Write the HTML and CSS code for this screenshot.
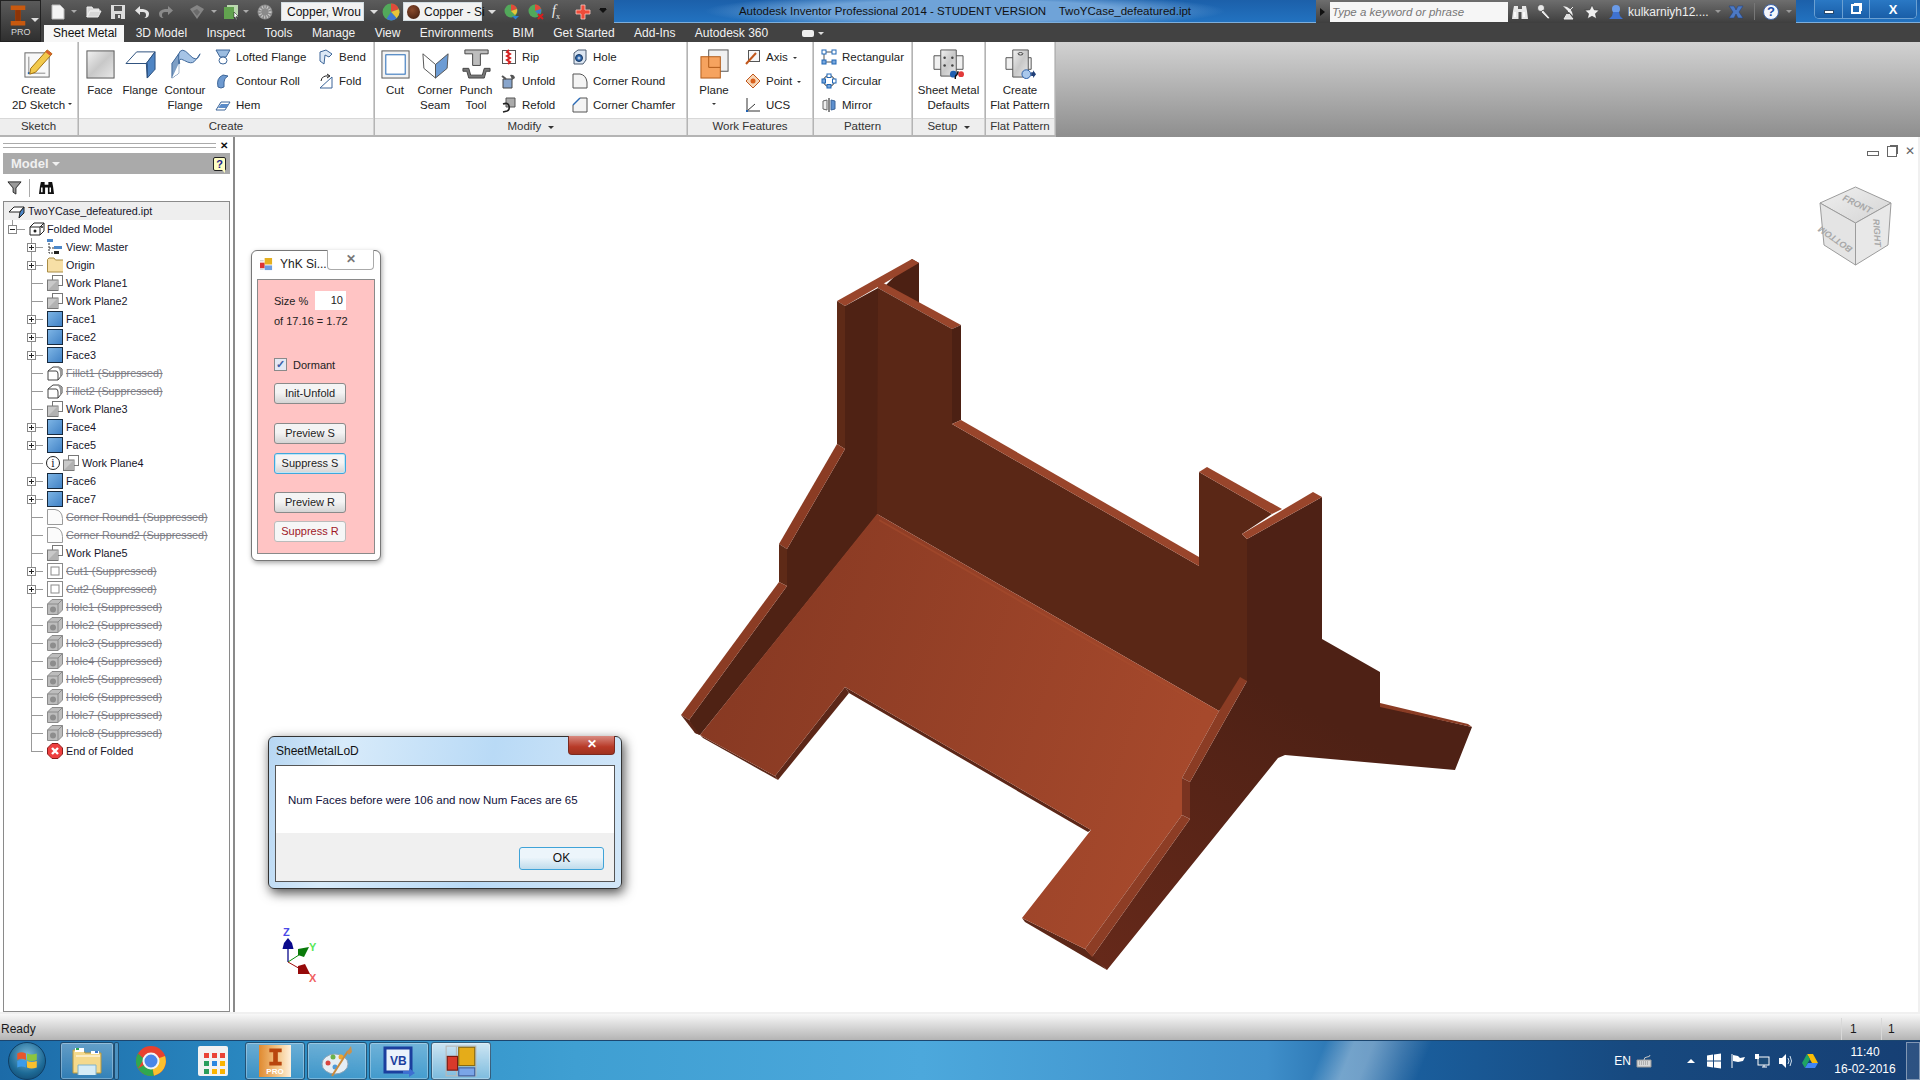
FILE: index.html
```html
<!DOCTYPE html>
<html lang="en">
<head>
    <meta charset="UTF-8">
    <title>Autodesk Inventor Professional 2014 - TwoYCase_defeatured.ipt</title>
    <link rel="stylesheet" href="styles.css">
</head>
<body>
<svg class="svg-defs" aria-hidden="true">
    <defs>
        <linearGradient id="g-face" x1="0" y1="0" x2="1" y2="1"><stop offset="0" stop-color="#7fb6e6"/><stop offset="1" stop-color="#3f80c4"/></linearGradient>
        <linearGradient id="g-steel" x1="0" y1="0" x2="1" y2="1"><stop offset="0" stop-color="#f2f2f2"/><stop offset=".5" stop-color="#c8c8c8"/><stop offset="1" stop-color="#e8e8e8"/></linearGradient>
        <linearGradient id="g-floor" gradientUnits="userSpaceOnUse" x1="700" y1="600" x2="1190" y2="760"><stop offset="0" stop-color="#853822"/><stop offset="1" stop-color="#a6492c"/></linearGradient>
        <linearGradient id="g-end" gradientUnits="userSpaceOnUse" x1="1250" y1="680" x2="1100" y2="970"><stop offset="0" stop-color="#4e2115"/><stop offset="1" stop-color="#66291a"/></linearGradient>
        <linearGradient id="g-cube" x1="0" y1="0" x2="1" y2="1"><stop offset="0" stop-color="#f0f0f0"/><stop offset="1" stop-color="#d4d4d4"/></linearGradient>
        <symbol id="i-face" viewBox="0 0 16 16"><rect x=".5" y=".5" width="15" height="15" fill="url(#g-face)" stroke="#16283c"/></symbol>
        <symbol id="i-plane" viewBox="0 0 16 16"><rect x="5.5" y=".5" width="10" height="10" fill="#fff" stroke="#777"/><rect x=".5" y="5" width="10.5" height="10.5" fill="#c9c9c9" stroke="#777"/><path d="M1 15 11 5v10z" fill="#b2b2b2"/></symbol>
        <symbol id="i-fillet" viewBox="0 0 16 16"><path d="M1 6 6 2h6l3 2v6l-4 5H1z" fill="#fff" stroke="#444"/><path d="M10 2h2l3 2v6l-2 2V7q0-3-3-5z" fill="#999"/><path d="M1 6h8q2 0 2 3v6" fill="none" stroke="#444"/></symbol>
        <symbol id="i-corner" viewBox="0 0 16 16"><path d="M.5 15.5V.5H8q7 1 7.5 9v6z" fill="#fbfbfb" stroke="#9a9a9a"/></symbol>
        <symbol id="i-cut" viewBox="0 0 16 16"><rect x=".5" y=".5" width="15" height="15" fill="#fff" stroke="#8a8a8a"/><rect x="4" y="4" width="8" height="8" fill="#fff" stroke="#8a8a8a"/></symbol>
        <symbol id="i-hole" viewBox="0 0 16 16"><path d="M.5 5 5 .5h10.500V11L11 15.500H.5z" fill="#bdbdbd" stroke="#8a8a8a"/><path d="M.5 5H11v10.500M11 5l4.500-4.500" fill="none" stroke="#8a8a8a"/><circle cx="6" cy="10.5" r="3" fill="#8d8d8d"/></symbol>
        <symbol id="i-hole-small" viewBox="0 0 16 16"><path d="M2 4 6 1h8v10l-3 4H2z" fill="#dce6f2" stroke="#4a5a70"/><circle cx="7" cy="9" r="3.5" fill="#2d66ad" stroke="#17375f"/><circle cx="7" cy="9" r="1.5" fill="#b9cde6"/></symbol>
        <symbol id="i-binoc" viewBox="0 0 16 16"><path d="M2 2h4v3h4V2h4l1 5 1 8H9.500V8h-3v7H0l1-8z" fill="currentColor"/><path d="M3 8v5M12 8v5" stroke="#fff" stroke-width="1.6"/></symbol>
    </defs>
</svg>

<div class="app-head">
    <div class="app-logo">
        <svg class="logo-mark" viewBox="0 0 22 24"><path d="M3 1h16v5h-5v12h5v5H3v-5h5V6H3z" fill="#c8590f"/><path d="M8 6h6v12H8z" fill="#8c3408"/></svg>
        <span class="logo-text">PRO</span>
        <span class="logo-caret"></span>
    </div>
    <div class="head-rows">
        <div class="title-bar">
            <div class="qat">
                <svg class="qat-icon qat-new" viewBox="0 0 16 16"><path d="M2 1h8l4 4v10H2z" fill="#f4f4f4" stroke="#bbb"/></svg>
                <span class="qat-caret qat-new-caret"></span>
                <svg class="qat-icon qat-open" viewBox="0 0 16 16"><path d="M1 13V3h5l1 2h6v2H4l-3 6 3-6h11l-3 6z" fill="#d8d8d8" stroke="#eee"/></svg>
                <svg class="qat-icon qat-save" viewBox="0 0 16 16"><path d="M1 1h14v14H1z" fill="#ddd"/><path d="M4 2h8v5H4z" fill="#555"/><path d="M5 10h6v5H5z" fill="#555"/><path d="M8 11h2v3H8z" fill="#ddd"/></svg>
                <svg class="qat-icon qat-undo" viewBox="0 0 16 16"><path d="M6 2 1 6.5 6 11V8h3q3 0 3 3t-2 3h2q3-1 3-4.500T9 5H6z" fill="#e4e4e4"/></svg>
                <svg class="qat-icon qat-redo" viewBox="0 0 16 16"><path d="M10 2l5 4.500-5 4.500V8H7q-3 0-3 3t2 3H4q-3-1-3-4.500T7 5h3z" fill="#8a8a8a"/></svg>
                <svg class="qat-icon qat-return" viewBox="0 0 16 16"><path d="M1 5l7-4 7 4-7 10z" fill="#858585"/><path d="M4 7l4-2 3 3-3 4z" fill="#6b6b6b"/></svg>
                <span class="qat-caret qat-return-caret"></span>
                <svg class="qat-icon qat-update" viewBox="0 0 16 16"><path d="M1 3h10v12H1z" fill="#62a34f"/><path d="M4 1h11v12H11V3H4z" fill="#bcd9b0"/><path d="M11 8l4 4-2 .5 1 3-1 .5-1-3-1 1z" fill="#fff" stroke="#111" stroke-width=".5"/></svg>
                <span class="qat-caret qat-update-caret"></span>
                <svg class="qat-icon qat-globe" viewBox="0 0 16 16"><circle cx="8" cy="8" r="7.5" fill="#8a8a8a"/><circle cx="8" cy="8" r="5" fill="none" stroke="#c9c9c9" stroke-dasharray="1 1.5" stroke-width="3"/></svg>
                <div class="qat-combo combo-material"><span class="combo-text">Copper, Wrou</span></div>
                <span class="combo-caret"></span>
                <svg class="qat-icon qat-wheel" viewBox="0 0 16 16"><circle cx="8" cy="8" r="7.5" fill="#52a85a"/><path d="M8 8V.5a7.5 7.5 0 0 1 7 5z" fill="#e04b3a"/><path d="M8 8 15 5.500a7.5 7.5 0 0 1-2 8z" fill="#e8c33a"/><path d="M8 8l5 5.500a7.5 7.5 0 0 1-9 .5z" fill="#3f78d0"/></svg>
                <div class="qat-combo combo-appearance">
                    <span class="swatch"></span>
                    <span class="combo-text">Copper - Si</span>
                </div>
                <span class="combo-caret"></span>
                <svg class="qat-icon qat-clear" viewBox="0 0 16 16"><circle cx="7" cy="7" r="6.5" fill="#52a85a"/><path d="M7 7V.5A6.5 6.5 0 0 1 13 5z" fill="#e04b3a"/><path d="M7 7 13 5a6.5 6.5 0 0 1-2 6z" fill="#e8c33a"/><path d="M8 12h7l-3.500 3.500z" fill="#2b7fd0"/></svg>
                <svg class="qat-icon qat-clear-two" viewBox="0 0 16 16"><circle cx="7" cy="7" r="6.5" fill="#52a85a"/><path d="M7 7V.5A6.5 6.5 0 0 1 13 5z" fill="#e04b3a"/><path d="M7 7 13 5a6.5 6.5 0 0 1-2 6z" fill="#3f78d0"/><path d="M10 10l5 5m0-5-5 5" stroke="#d81e1e" stroke-width="2"/></svg>
                <span class="qat-fx"><i>f</i><sub>x</sub></span>
                <svg class="qat-icon qat-cross" viewBox="0 0 16 16"><path d="M6 1h4v5h5v4h-5v5H6v-5H1V6h5z" fill="#f04c3a" stroke="#f7c9c0" stroke-width=".8"/></svg>
                <span class="qat-more"></span>
            </div>
            <div class="title-text">Autodesk Inventor Professional 2014 - STUDENT VERSION &nbsp;&nbsp; TwoYCase_defeatured.ipt</div>
            <div class="search-bar">
                <span class="search-arrow"></span>
                <div class="search-input">Type a keyword or phrase</div>
                <svg class="search-icon search-binoc"><use href="#i-binoc"/></svg>
                <svg class="search-icon search-key" viewBox="0 0 16 16"><circle cx="5" cy="4" r="3.5" fill="#e8e8e8" stroke="#333" stroke-width=".6"/><path d="M7 6l7 8-2 1-7-7z" fill="#e8e8e8" stroke="#333" stroke-width=".6"/></svg>
                <svg class="search-icon search-dish" viewBox="0 0 16 16"><path d="M3 2q9 1 10 10z" fill="#eee"/><path d="M8 8l5-5M7 10l-3 5h9l-4-5" stroke="#eee" fill="#ddd"/></svg>
                <svg class="search-icon search-star" viewBox="0 0 16 16"><path d="M8 1l2.200 4.800 5 .5-3.800 3.400 1.100 5L8 12.200 3.500 14.700l1.100-5L.8 6.300l5-.5z" fill="#eee" stroke="#222" stroke-width=".5"/></svg>
                <svg class="search-icon search-user" viewBox="0 0 16 16"><circle cx="8" cy="5" r="4" fill="#6a9be8"/><path d="M5 8h6l1 4 3 3H1l3-3z" fill="#3f72cf"/></svg>
                <span class="search-user-name">kulkarniyh12....</span>
                <span class="search-caret"></span>
                <svg class="search-icon search-x" viewBox="0 0 16 16"><path d="M1 2h5l2 4 2-4h5l-4 6 4 6h-5l-2-4-2 4H1l4-6z" fill="#4c79c4" stroke="#1f3c78" stroke-width=".5"/></svg>
                <span class="search-sep"></span>
                <span class="search-help">?</span>
                <span class="search-caret"></span>
            </div>
            <div class="win-buttons">
                <span class="win-btn win-min"><span class="glyph-min"></span></span>
                <span class="win-btn win-max"><span class="glyph-max"></span></span>
                <span class="win-btn win-close">X</span>
            </div>
        </div>
        <nav class="tab-bar">
            <a class="tab tab-active">Sheet Metal</a>
            <a class="tab">3D Model</a>
            <a class="tab">Inspect</a>
            <a class="tab">Tools</a>
            <a class="tab">Manage</a>
            <a class="tab">View</a>
            <a class="tab">Environments</a>
            <a class="tab">BIM</a>
            <a class="tab">Get Started</a>
            <a class="tab">Add-Ins</a>
            <a class="tab">Autodesk 360</a>
            <span class="tab-extra"><span class="tab-pill"></span><span class="tab-pill-caret"></span></span>
        </nav>
    </div>
</div>

<div class="ribbon">
    <section class="panel panel-sketch">
        <div class="panel-body">
            <div class="big-btn btn-full">
                <svg class="big-icon" viewBox="0 0 32 32"><rect x="2" y="5" width="25" height="25" fill="#f8f8f8" stroke="#666"/><path d="M6 9v17h17" fill="none" stroke="#888"/><rect x="5" y="25" width="2" height="2" fill="#1d5fb0"/><path d="M8 21 25 2l5 4L13 25l-6 2z" fill="#f2c94c" stroke="#a0700f"/><path d="M25 2l5 4-2 2-5-4z" fill="#d9602c"/></svg>
                <span class="big-label">Create<br>2D Sketch</span>
                <span class="mini-caret caret-sketch"></span>
            </div>
        </div>
        <div class="panel-title">Sketch</div>
    </section>
    <section class="panel panel-create">
        <div class="panel-body">
            <div class="big-btn btn-face">
                <svg class="big-icon" viewBox="0 0 32 32"><rect x="2" y="3" width="28" height="28" fill="url(#g-steel)" stroke="#555"/></svg>
                <span class="big-label">Face</span>
            </div>
            <div class="big-btn btn-flange">
                <svg class="big-icon" viewBox="0 0 32 32"><path d="M1 16 12 4h19L22 16z" fill="#fff" stroke="#2a4e7c"/><path d="M22 16l9-12v18l-8 9z" fill="#4f85c4" stroke="#2a4e7c"/><path d="M22 16h1v15" stroke="#2a4e7c" fill="none"/></svg>
                <span class="big-label">Flange</span>
            </div>
            <div class="big-btn btn-contour">
                <svg class="big-icon" viewBox="0 0 32 32"><path d="M2 16q4-2 7-10t11 1 11-1q-3 5-6 8t-10-1-5 3z" fill="#a6c4e6" stroke="#3c6598"/><path d="M2 16 9 6v20l-7 5z" fill="#7e9fc5" stroke="#3c6598"/><path d="M2 31l7-5V16z" fill="#fff"/></svg>
                <span class="big-label">Contour<br>Flange</span>
            </div>
            <div class="small-col col-create-one">
                <div class="small-btn">
                    <svg class="small-icon" viewBox="0 0 16 16"><path d="M1 1h14l-4 7H5z" fill="#9bbce0" stroke="#3c6598"/><ellipse cx="8" cy="11.5" rx="4" ry="3.5" fill="#fff" stroke="#3c6598"/></svg>
                    <span>Lofted Flange</span>
                </div>
                <div class="small-btn">
                    <svg class="small-icon" viewBox="0 0 16 16"><path d="M3 14q-2-9 5-12l5 1q-4 2-4 6v5l-3 1z" fill="#6e9ad0" stroke="#3c6598"/></svg>
                    <span>Contour Roll</span>
                </div>
                <div class="small-btn">
                    <svg class="small-icon" viewBox="0 0 16 16"><path d="M1 13 6 5h9l-5 8z" fill="#fff" stroke="#3c6598"/><path d="M3 11l3-4h8l-3 4z" fill="#5a8bc8"/></svg>
                    <span>Hem</span>
                </div>
            </div>
            <div class="small-col">
                <div class="small-btn">
                    <svg class="small-icon" viewBox="0 0 16 16"><path d="M2 3l6-2 6 4-3 3-4-2-1 9-4-3z" fill="#dce8f5" stroke="#3c6598"/></svg>
                    <span>Bend</span>
                </div>
                <div class="small-btn">
                    <svg class="small-icon" viewBox="0 0 16 16"><path d="M2 15 14 4v11z" fill="#fff" stroke="#3c6598"/><path d="M3 8q1-6 8-5M9 1l3 2-3 2" fill="none" stroke="#222"/></svg>
                    <span>Fold</span>
                </div>
            </div>
        </div>
        <div class="panel-title">Create</div>
    </section>
    <section class="panel panel-modify">
        <div class="panel-body">
            <div class="big-btn btn-cut">
                <svg class="big-icon" viewBox="0 0 32 32"><rect x="2" y="3" width="28" height="28" fill="#f3f3f3" stroke="#555"/><rect x="6" y="7" width="20" height="20" fill="#fff" stroke="#1f66b5"/></svg>
                <span class="big-label">Cut</span>
            </div>
            <div class="big-btn btn-seam">
                <svg class="big-icon" viewBox="0 0 32 32"><path d="M3 6 16 17v14L4 21z" fill="#fff" stroke="#555"/><path d="M29 6 16 17v14l12-10z" fill="#6d9cd4" stroke="#555"/></svg>
                <span class="big-label">Corner<br>Seam</span>
            </div>
            <div class="big-btn btn-punch">
                <svg class="big-icon" viewBox="0 0 32 32"><path d="M4 2h24v4H20v12h-8V6H4z" fill="#bdbdbd" stroke="#444"/><path d="M2 21h6l2 7h12l2-7h6v3h-4l-2 7H8l-2-7H2z" fill="#777" stroke="#444"/></svg>
                <span class="big-label">Punch<br>Tool</span>
            </div>
            <div class="small-col col-modify-one">
                <div class="small-btn">
                    <svg class="small-icon" viewBox="0 0 16 16"><rect x="1.5" y="1.5" width="13" height="13" fill="#fff" stroke="#555"/><path d="M8 1l-2 2 3 2-3 2 3 2-3 2 3 2-2 2" fill="none" stroke="#d62020" stroke-width="2"/></svg>
                    <span>Rip</span>
                </div>
                <div class="small-btn">
                    <svg class="small-icon" viewBox="0 0 16 16"><path d="M2 6h9v9H2z" fill="#88a5cc" stroke="#444"/><path d="M9 2q4-1 5 3l-3 2-1-3z" fill="#555"/><path d="M1 3l4 3" stroke="#555" stroke-width="2"/></svg>
                    <span>Unfold</span>
                </div>
                <div class="small-btn">
                    <svg class="small-icon" viewBox="0 0 16 16"><path d="M5 1h9v9H5z" fill="#aaa" stroke="#555"/><path d="M2 7q5-2 6 2t-2 5l-4 1" fill="none" stroke="#222" stroke-width="1.6"/></svg>
                    <span>Refold</span>
                </div>
            </div>
            <div class="small-col">
                <div class="small-btn">
                    <svg class="small-icon"><use href="#i-hole-small"/></svg>
                    <span>Hole</span>
                </div>
                <div class="small-btn">
                    <svg class="small-icon" viewBox="0 0 16 16"><path d="M1 15V1h7q6 1 7 8v6z" fill="#f4f4f4" stroke="#555"/></svg>
                    <span>Corner Round</span>
                </div>
                <div class="small-btn">
                    <svg class="small-icon" viewBox="0 0 16 16"><path d="M1 15V8l7-7h7v14z" fill="#f4f4f4" stroke="#555"/><path d="M1 8l7-7" stroke="#2a6ab5" stroke-width="1.4"/></svg>
                    <span>Corner Chamfer</span>
                </div>
            </div>
        </div>
        <div class="panel-title">Modify <span class="title-caret"></span></div>
    </section>
    <section class="panel panel-work">
        <div class="panel-body">
            <div class="big-btn btn-plane">
                <svg class="big-icon" viewBox="0 0 32 32"><rect x="10" y="2" width="20" height="22" fill="#f0f0f0" stroke="#555"/><rect x="2" y="9" width="20" height="22" fill="#f6a35f" stroke="#b05a18"/><path d="M10 9v11h12" fill="none" stroke="#b05a18"/></svg>
                <span class="big-label">Plane</span>
                <span class="mini-caret caret-plane"></span>
            </div>
            <div class="small-col">
                <div class="small-btn">
                    <svg class="small-icon" viewBox="0 0 16 16"><rect x="3.5" y="1.5" width="11" height="11" fill="#f6f6f6" stroke="#555"/><path d="M1 15 11 4" stroke="#c0561b" stroke-width="2"/></svg>
                    <span>Axis</span><span class="mini-caret"></span>
                </div>
                <div class="small-btn">
                    <svg class="small-icon" viewBox="0 0 16 16"><path d="M8 1l7 7-7 7-7-7z" fill="#f7d5b5" stroke="#c0561b"/><circle cx="8" cy="8" r="2.5" fill="#d9601c"/></svg>
                    <span>Point</span><span class="mini-caret"></span>
                </div>
                <div class="small-btn">
                    <svg class="small-icon" viewBox="0 0 16 16"><path d="M2 1v13h13M2 14 10 7" fill="none" stroke="#333"/><rect x="1" y="13" width="2" height="2" fill="#1d5fb0"/></svg>
                    <span>UCS</span>
                </div>
            </div>
        </div>
        <div class="panel-title">Work Features</div>
    </section>
    <section class="panel panel-pattern">
        <div class="panel-body">
            <div class="small-col">
                <div class="small-btn">
                    <svg class="small-icon" viewBox="0 0 16 16"><path d="M3 3h10M3 13h10M3 3v10" stroke="#555" fill="none"/><rect x="1" y="1" width="4" height="4" fill="#fff" stroke="#1f66b5"/><rect x="11" y="1" width="4" height="4" fill="#fff" stroke="#1f66b5"/><rect x="1" y="11" width="4" height="4" fill="#7aa7dc" stroke="#1f66b5"/><rect x="11" y="11" width="4" height="4" fill="#7aa7dc" stroke="#1f66b5"/></svg>
                    <span>Rectangular</span>
                </div>
                <div class="small-btn">
                    <svg class="small-icon" viewBox="0 0 16 16"><circle cx="8" cy="8" r="5.5" fill="none" stroke="#333"/><rect x="6" y="1" width="4" height="3.5" fill="#fff" stroke="#1f66b5"/><rect x="1" y="6" width="3.5" height="4" fill="#7aa7dc" stroke="#1f66b5"/><rect x="11.5" y="6" width="3.5" height="4" fill="#fff" stroke="#1f66b5"/><rect x="6" y="11.5" width="4" height="3.5" fill="#7aa7dc" stroke="#1f66b5"/></svg>
                    <span>Circular</span>
                </div>
                <div class="small-btn">
                    <svg class="small-icon" viewBox="0 0 16 16"><path d="M8 1v14" stroke="#111"/><path d="M6 3 2 4v8l4 1z" fill="#eee" stroke="#666"/><path d="M10 3l4 1v8l-4 1z" fill="#5d90cf" stroke="#3c6598"/></svg>
                    <span>Mirror</span>
                </div>
            </div>
        </div>
        <div class="panel-title">Pattern</div>
    </section>
    <section class="panel panel-setup">
        <div class="panel-body">
            <div class="big-btn btn-full">
                <svg class="big-icon" viewBox="0 0 32 32"><path d="M1 8h30v14H1z" fill="#f0f0f0" stroke="#555"/><path d="M8 2h16v27H8z" fill="url(#g-steel)" stroke="#555"/><circle cx="12" cy="10" r="1.3" fill="#444"/><circle cx="20" cy="10" r="1.3" fill="#444"/><circle cx="12" cy="18" r="1.3" fill="#444"/><circle cx="20" cy="18" r="1.3" fill="#444"/><circle cx="21" cy="27" r="3.5" fill="#1f5fb0"/><circle cx="29" cy="27" r="3" fill="#e23a3a"/><path d="M26 24q-1 4-2 4t-1 4" fill="none" stroke="#111" stroke-width="1.5"/></svg>
                <span class="big-label">Sheet Metal<br>Defaults</span>
            </div>
        </div>
        <div class="panel-title">Setup <span class="title-caret"></span></div>
    </section>
    <section class="panel panel-flat">
        <div class="panel-body">
            <div class="big-btn btn-full">
                <svg class="big-icon" viewBox="0 0 32 32"><path d="M1 10h26v12H1z" fill="#f0f0f0" stroke="#555"/><path d="M8 2h16v28H8z" fill="url(#g-steel)" stroke="#555"/><ellipse cx="16" cy="6" rx="2.5" ry="1.2" fill="#fff" stroke="#333"/><circle cx="22" cy="27" r="4.5" fill="#a9c8ec" stroke="#2a5ea5"/><path d="M27 25h2v-2l3 4-3 4v-2h-2z" fill="#1f3f78"/></svg>
                <span class="big-label">Create<br>Flat Pattern</span>
            </div>
        </div>
        <div class="panel-title">Flat Pattern</div>
    </section>
    <div class="ribbon-rest"></div>
</div>

<div class="main">
    <aside class="browser">
        <div class="browser-grip">
            <span class="grip-lines"></span>
            <span class="grip-close">✕</span>
        </div>
        <div class="browser-header">
            <span class="browser-name">Model</span>
            <span class="browser-name-caret"></span>
            <span class="browser-help">?</span>
        </div>
        <div class="browser-tools">
            <svg class="tool-icon" viewBox="0 0 16 16"><path d="M1 2h14L9.5 8.5V15l-3-2V8.5z" fill="#999" stroke="#222"/></svg>
            <span class="tool-sep"></span>
            <svg class="tool-icon tool-binoc"><use href="#i-binoc"/></svg>
        </div>
        <div class="tree">
            <div class="tree-root">
                <svg class="tree-icon" viewBox="0 0 16 16"><path d="M0 9l5-5h10l-4 5z" fill="#fff" stroke="#222"/><path d="M11 9l4-5v6l-5 5z" fill="#4c87c9" stroke="#222"/></svg>
                <span>TwoYCase_defeatured.ipt</span>
            </div>
            <div class="tree-folded">
                <span class="expander is-open"></span>
                <svg class="tree-icon" viewBox="0 0 16 16"><path d="M1 6l4-4h10v8l-4 4H1z" fill="#fff" stroke="#222"/><path d="M1 6h10v8M11 6l4-4" fill="none" stroke="#222"/><circle cx="6" cy="10" r="1.5" fill="#222"/><circle cx="13" cy="6" r="1" fill="#222"/></svg>
                <span>Folded Model</span>
            </div>
            <ul class="tree-list">
                <li class="tree-row"><span class="expander"></span><svg class="tree-icon" viewBox="0 0 16 16"><path d="M2 4v10h4M2 9h5" fill="none" stroke="#333" stroke-dasharray="2 1"/><rect x="0" y="0" width="6" height="3" fill="#4c87c9"/><rect x="7" y="7" width="8" height="3" fill="#4c87c9"/><rect x="7" y="12" width="5" height="3" fill="#222"/></svg><span>View: Master</span></li>
                <li class="tree-row"><span class="expander"></span><svg class="tree-icon" viewBox="0 0 16 16"><path d="M.5 15V2.5L2 1h5l1.5 2h8v12z" fill="#f7dfa6" stroke="#a98c45"/></svg><span>Origin</span></li>
                <li class="tree-row"><svg class="tree-icon"><use href="#i-plane"/></svg><span>Work Plane1</span></li>
                <li class="tree-row"><svg class="tree-icon"><use href="#i-plane"/></svg><span>Work Plane2</span></li>
                <li class="tree-row"><span class="expander"></span><svg class="tree-icon"><use href="#i-face"/></svg><span>Face1</span></li>
                <li class="tree-row"><span class="expander"></span><svg class="tree-icon"><use href="#i-face"/></svg><span>Face2</span></li>
                <li class="tree-row"><span class="expander"></span><svg class="tree-icon"><use href="#i-face"/></svg><span>Face3</span></li>
                <li class="tree-row is-suppressed"><svg class="tree-icon"><use href="#i-fillet"/></svg><span>Fillet1 (Suppressed)</span></li>
                <li class="tree-row is-suppressed"><svg class="tree-icon"><use href="#i-fillet"/></svg><span>Fillet2 (Suppressed)</span></li>
                <li class="tree-row"><svg class="tree-icon"><use href="#i-plane"/></svg><span>Work Plane3</span></li>
                <li class="tree-row"><span class="expander"></span><svg class="tree-icon"><use href="#i-face"/></svg><span>Face4</span></li>
                <li class="tree-row"><span class="expander"></span><svg class="tree-icon"><use href="#i-face"/></svg><span>Face5</span></li>
                <li class="tree-row row-info"><span class="info-mark">i</span><svg class="tree-icon"><use href="#i-plane"/></svg><span>Work Plane4</span></li>
                <li class="tree-row"><span class="expander"></span><svg class="tree-icon"><use href="#i-face"/></svg><span>Face6</span></li>
                <li class="tree-row"><span class="expander"></span><svg class="tree-icon"><use href="#i-face"/></svg><span>Face7</span></li>
                <li class="tree-row is-suppressed"><svg class="tree-icon"><use href="#i-corner"/></svg><span>Corner Round1 (Suppressed)</span></li>
                <li class="tree-row is-suppressed"><svg class="tree-icon"><use href="#i-corner"/></svg><span>Corner Round2 (Suppressed)</span></li>
                <li class="tree-row"><svg class="tree-icon"><use href="#i-plane"/></svg><span>Work Plane5</span></li>
                <li class="tree-row is-suppressed"><span class="expander"></span><svg class="tree-icon"><use href="#i-cut"/></svg><span>Cut1 (Suppressed)</span></li>
                <li class="tree-row is-suppressed"><span class="expander"></span><svg class="tree-icon"><use href="#i-cut"/></svg><span>Cut2 (Suppressed)</span></li>
                <li class="tree-row is-suppressed"><svg class="tree-icon"><use href="#i-hole"/></svg><span>Hole1 (Suppressed)</span></li>
                <li class="tree-row is-suppressed"><svg class="tree-icon"><use href="#i-hole"/></svg><span>Hole2 (Suppressed)</span></li>
                <li class="tree-row is-suppressed"><svg class="tree-icon"><use href="#i-hole"/></svg><span>Hole3 (Suppressed)</span></li>
                <li class="tree-row is-suppressed"><svg class="tree-icon"><use href="#i-hole"/></svg><span>Hole4 (Suppressed)</span></li>
                <li class="tree-row is-suppressed"><svg class="tree-icon"><use href="#i-hole"/></svg><span>Hole5 (Suppressed)</span></li>
                <li class="tree-row is-suppressed"><svg class="tree-icon"><use href="#i-hole"/></svg><span>Hole6 (Suppressed)</span></li>
                <li class="tree-row is-suppressed"><svg class="tree-icon"><use href="#i-hole"/></svg><span>Hole7 (Suppressed)</span></li>
                <li class="tree-row is-suppressed"><svg class="tree-icon"><use href="#i-hole"/></svg><span>Hole8 (Suppressed)</span></li>
                <li class="tree-row"><svg class="tree-icon" viewBox="0 0 16 16"><path d="M5 .5h6L15.5 5v6L11 15.5H5L.5 11V5z" fill="#ee3f3f" stroke="#8c1c1c"/><path d="M5 5l6 6m0-6-6 6" stroke="#fff" stroke-width="2.4"/></svg><span>End of Folded</span></li>
            </ul>
        </div>
    </aside>

    <div class="viewport">
        <svg class="scene" viewBox="235 137 1683 877">
            <polygon points="912,259 919,263 919,305 885,286" fill="#4c2013"/>
            <polygon points="837,301 912,259 919,263 845,306" fill="#99452b"/>
            <polygon points="876,279 961,325 952,329 878,288" fill="#99452b"/>
            <polygon points="837,301 845,306 845,449 837,444" fill="#5e2a17"/>
            <polygon points="845,306 878,288 878,514 700,735 695,733 689,720 787,586 787,549 845,449" fill="#4f2214"/>
            <polygon points="837,444 845,449 787,549 779,544" fill="#8b3c24"/>
            <polygon points="779,544 787,549 787,586 779,582" fill="#5e2a17"/>
            <polygon points="779,582 787,586 689,720 681,715" fill="#8b3c24"/>
            <polygon points="681,715 689,720 700,735 695,733" fill="#5a2617"/>
            <polygon points="878,288 952,329 952,424 1199,566 1199,472 1272,514 1242,534 1247,539 1247,681 1219,711 877,514" fill="#5a2716"/>
            <polygon points="952,329 961,325 961,420 952,424" fill="#4c2013"/>
            <polygon points="952,424 961,420 1199,557 1199,566" fill="#99452b"/>
            <polygon points="1199,472 1207,467 1282,509 1272,514" fill="#99452b"/>
            <polygon points="1247,539 1322,497 1322,639 1380,672 1380,706 1472,727 1455,770 1285,755 1278,758 1107,970 1092,957 1190,819 1190,782 1247,681" fill="url(#g-end)"/>
            <polygon points="1242,534 1313,492 1322,497 1247,539" fill="#99452b"/>
            <polygon points="1380,703 1468,724 1472,727 1380,707" fill="#8b3c24"/>
            <polygon points="700,735 775,776 778,780 703,738" fill="#5c2718"/>
            <polygon points="775,776 845,687 849,693 778,780" fill="#5c2718"/>
            <polygon points="845,687 1091,830 1088,832 849,693" fill="#5c2718"/>
            <polygon points="1022,918 1085,949 1107,970 1025,922" fill="#5c2718"/>
            <polygon points="877,514 1219,711 1182,778 1182,815 1085,949 1022,918 1091,830 845,687 775,776 700,735" fill="url(#g-floor)"/>
            <polyline points="879,520 1218,715" fill="none" stroke="#a84c2e" stroke-width="2" opacity=".55"/>
            <polygon points="1219,711 1240,677 1247,681 1190,782 1182,778" fill="#8b3c24"/>
            <polygon points="1182,778 1190,782 1190,819 1182,815" fill="#7a3320"/>
            <polygon points="1182,815 1190,819 1092,957 1085,949" fill="#8d3d25"/>

            <g class="triad">
                <path d="M288 962V945" stroke="#0a0a8c" stroke-width="1.3"/>
                <path d="M288 938l4 5 1.5 6h-11l1.5-6z" fill="#0a0a8c"/>
                <path d="M288 962l14-9" stroke="#0a8c0a" stroke-width="1"/>
                <path d="M298 949l11-2-5 10-6-2z" fill="#0a7a0a"/>
                <path d="M288 962l14 8" stroke="#a00a0a" stroke-width="1"/>
                <path d="M298 966l7-2 5 10h-12z" fill="#960a0a"/>
                <text x="283" y="936" class="axis-z">Z</text>
                <text x="309" y="951" class="axis-y">Y</text>
                <text x="309" y="982" class="axis-x">X</text>
            </g>

            <g class="cube">
                <polygon points="1855.5,187 1891,203 1855.5,223 1820,203" fill="url(#g-cube)" stroke="#9c9c9c"/>
                <polygon points="1820,203 1855.5,223 1855.5,265 1824,245" fill="#e4e4e4" stroke="#9c9c9c"/>
                <polygon points="1891,203 1855.5,223 1855.5,265 1888,245" fill="#e8e8e8" stroke="#9c9c9c"/>
                <text class="cube-text" transform="translate(1842,200) rotate(26)">FRONT</text>
                <text class="cube-text" transform="translate(1853,248) rotate(215)">BOTTOM</text>
                <text class="cube-text" transform="translate(1873,219) rotate(86)">RIGHT</text>
            </g>
        </svg>

        <div class="view-controls">
            <span class="view-min"></span>
            <span class="view-restore"></span>
            <span class="view-close">✕</span>
        </div>

        <div class="size-window">
            <div class="size-head">
                <svg class="size-icon" viewBox="0 0 14 14"><rect x="0" y="5" width="5" height="6" fill="#d33"/><rect x="5" y="0" width="8" height="7" fill="#e5b020"/><rect x="5" y="8" width="8" height="5" fill="#6e9de0"/><path d="M0 3h4M0 12h4" stroke="#bbb"/></svg>
                <span>YhK Si...</span>
                <span class="size-close">✕</span>
            </div>
            <div class="size-body">
                <div class="size-row">
                    <span>Size %</span>
                    <span class="size-input">10</span>
                </div>
                <div class="size-result">of 17.16 = 1.72</div>
                <label class="dormant"><span class="check">✓</span>Dormant</label>
                <div class="size-btn btn-init">Init-Unfold</div>
                <div class="size-btn btn-prev-s">Preview S</div>
                <div class="size-btn btn-sup-s">Suppress S</div>
                <div class="size-btn btn-prev-r">Preview R</div>
                <div class="size-btn btn-sup-r">Suppress R</div>
            </div>
        </div>

        <div class="msg-window">
            <div class="msg-head">
                <span>SheetMetalLoD</span>
                <span class="msg-close">✕</span>
            </div>
            <div class="msg-body">
                <div class="msg-text">Num Faces before were 106 and now Num Faces are 65</div>
                <div class="msg-foot"><span class="msg-ok">OK</span></div>
            </div>
        </div>
    </div>
</div>

<footer class="status-bar">
    <span class="status-ready">Ready</span>
    <span class="status-cell">1</span>
    <span class="status-cell">1</span>
</footer>

<div class="taskbar">
    <div class="start-orb">
        <svg viewBox="0 0 24 24" class="orb-flag"><path d="M3 5q4-2 8 0v6q-4-2-8 0z" fill="#e8562a"/><path d="M12 5q4 2 9 0v6q-5 2-9 0z" fill="#8cc63f"/><path d="M3 12q4-2 8 0v6q-4-2-8 0z" fill="#3d9be9"/><path d="M12 12q4 2 9 0v6q-5 2-9 0z" fill="#fbc02d"/></svg>
    </div>
    <div class="task-btn task-folder">
        <svg class="task-icon" viewBox="0 0 32 32"><path d="M2 28V5h10l2 3h16v20z" fill="#f4d98c" stroke="#b8983f"/><path d="M5 11h24" stroke="#fff"/><rect x="4" y="3" width="9" height="4" fill="#fff"/><rect x="5" y="3" width="3" height="2" fill="#2fa84f"/><rect x="20" y="6" width="8" height="3" fill="#fff"/><rect x="24" y="6" width="3" height="2" fill="#3f78d0"/><path d="M7 30V20h18v10" fill="#d5ecf6" stroke="#7fb2cc"/></svg>
    </div>
    <span class="task-sliver"></span>
    <div class="task-plain">
        <svg class="task-icon" viewBox="0 0 32 32"><circle cx="16" cy="16" r="15" fill="#e8412f"/><path d="M16 16 3 23.5A15 15 0 0 0 19 30.7z" fill="#2fa84f"/><path d="M16 16 30 11a15 15 0 0 1-11 19.7z" fill="#fbc02d"/><path d="M3 8.5A15 15 0 0 0 3 23.5L9 14z" fill="#2fa84f"/><circle cx="16" cy="16" r="7.5" fill="#4a86e8" stroke="#f4f4f4" stroke-width="2"/></svg>
    </div>
    <div class="task-plain">
        <div class="app-grid"><span class="dot-r"></span><span class="dot-r"></span><span class="dot-r"></span><span class="dot-g"></span><span class="dot-b"></span><span class="dot-y"></span><span class="dot-g"></span><span class="dot-y"></span><span class="dot-y"></span></div>
    </div>
    <div class="task-btn">
        <div class="inventor-tile">
            <svg class="tile-mark" viewBox="0 0 22 24"><path d="M3 1h16v5h-5v12h5v5H3v-5h5V6H3z" fill="#b8460e"/></svg>
            <span class="tile-text">PRO</span>
        </div>
    </div>
    <div class="task-btn">
        <svg class="task-icon" viewBox="0 0 32 32"><ellipse cx="14" cy="19" rx="13" ry="10" fill="#e6eef4" stroke="#8fa7b8"/><circle cx="7" cy="18" r="2.5" fill="#d9453f"/><circle cx="12" cy="12" r="2.5" fill="#6cb24a"/><circle cx="20" cy="12" r="2.5" fill="#f0a830"/><circle cx="14" cy="22" r="2.5" fill="#4f9bd9"/><path d="M11 31 27 6" stroke="#c98a3c" stroke-width="2"/><path d="M26 7l4-6 1 6-3 3z" fill="#c9924d"/></svg>
    </div>
    <div class="task-btn">
        <svg class="task-icon" viewBox="0 0 32 32"><rect x="2" y="3" width="26" height="24" fill="#eaf2fb" stroke="#1b3f9e" stroke-width="3"/><text x="7" y="20" class="vb-text">VB</text><path d="M20 26h6v-3l6 5-6 4v-3h-6z" fill="#3d6fd1"/></svg>
    </div>
    <div class="task-btn task-lit">
        <svg class="task-icon" viewBox="0 0 28 28"><rect x="1" y="1" width="26" height="26" fill="none" stroke="#b8b8b8"/><path d="M1 10h10M1 19h10M10 1v26" stroke="#b8b8b8"/><rect x="2" y="10" width="9" height="12" fill="#d83a2b" stroke="#7a1a12"/><rect x="12" y="2" width="14" height="16" fill="#e5ac19" stroke="#8a6a10"/><rect x="12" y="20" width="14" height="7" fill="#7aa5e8" stroke="#3f5f9e"/></svg>
    </div>
    <div class="tray">
        <span class="tray-lang">EN</span>
        <svg class="tray-icon tray-kb" viewBox="0 0 16 16"><path d="M1 7h14v7H1z" fill="#d8d8d8" stroke="#999"/><path d="M3 9h10M3 11h10" stroke="#888" stroke-dasharray="1 1"/><path d="M8 7q0-3 3-3t3-2" fill="none" stroke="#c5c5c5"/></svg>
        <span class="tray-up"></span>
        <svg class="tray-icon tray-win" viewBox="0 0 16 16"><path d="M1 2.5l6-1v6H1zM8 1.5l7-1V7.5H8zM1 8.5h6v6l-6-1zM8 8.5h7v7l-7-1z" fill="#fff"/></svg>
        <svg class="tray-icon" viewBox="0 0 16 16"><path d="M2 1v14" stroke="#fff"/><path d="M3 2l5 1 2 2 5-1-2 4-5 1-5-1z" fill="#fff"/></svg>
        <svg class="tray-icon" viewBox="0 0 16 16"><rect x="4" y="4" width="11" height="8" fill="#1c4b78" stroke="#fff"/><path d="M8 14h5M10 12v2" stroke="#fff"/><rect x="1" y="1" width="4" height="5" fill="#fff"/></svg>
        <svg class="tray-icon" viewBox="0 0 16 16"><path d="M1 5h3l4-4v14l-4-4H1z" fill="#fff"/><path d="M10 5q2 3 0 6M12 3q3 5 0 10" fill="none" stroke="#cfe0ee"/></svg>
        <svg class="tray-icon" viewBox="0 0 16 16"><path d="M5 1h6l5 9H10z" fill="#fbbc05"/><path d="M5 1 0 10l3 5 5-9z" fill="#1fa463"/><path d="M3 15h10l3-5H6z" fill="#4285f4"/></svg>
        <div class="clock"><span>11:40</span><span>16-02-2016</span></div>
        <span class="show-desktop"></span>
    </div>
</div>
</body>
</html>
```

FILE: styles.css
```css
* {
    box-sizing: border-box;
}
html, body {
    margin: 0;
    padding: 0;
    width: 1920px;
    height: 1080px;
    overflow: hidden;
}
body {
    display: flex;
    flex-direction: column;
    font-family: "Liberation Sans", Arial, sans-serif;
    font-size: 12px;
    color: #1a1a1a;
    background: #f0f0f0;
}
svg {
    display: block;
    flex: none;
}
.svg-defs {
    position: absolute;
    width: 0;
    height: 0;
}

/* top of the window */
.app-head {
    display: flex;
    height: 42px;
    flex: none;
}
.app-logo {
    position: relative;
    width: 41px;
    background: linear-gradient(#5a5a5a, #2f2f2f);
    border: 1px solid #222;
}
.logo-mark {
    position: absolute;
    left: 7px;
    top: 3px;
    width: 20px;
    height: 23px;
}
.logo-text {
    position: absolute;
    left: 10px;
    top: 26px;
    font-size: 9px;
    color: #d8d8d8;
}
.logo-caret {
    position: absolute;
    right: 1px;
    top: 17px;
    border: 4px solid transparent;
    border-top-color: #ddd;
}
.head-rows {
    flex: 1;
    display: flex;
    flex-direction: column;
}
.title-bar {
    display: flex;
    height: 23px;
    padding-right: 3px;
    background: linear-gradient(#1c60aa, #2272c0);
    border-bottom: 1px solid #7eaedb;
}
.qat {
    display: flex;
    align-items: center;
    width: 573px;
    height: 23px;
    background: linear-gradient(#5c5c5c, #424242);
    color: #eee;
}
.qat-icon {
    width: 16px;
    height: 16px;
}
.qat-new {
    margin-left: 9px;
}
.qat-caret {
    border: 3px solid transparent;
    border-top-color: #aaa;
    margin-top: 3px;
}
.qat-new-caret {
    margin-left: 5px;
}
.qat-open {
    margin-left: 9px;
}
.qat-save {
    margin-left: 8px;
}
.qat-undo {
    margin-left: 8px;
}
.qat-redo {
    margin-left: 8px;
}
.qat-return {
    margin-left: 15px;
}
.qat-return-caret {
    margin-left: 6px;
}
.qat-update {
    margin-left: 6px;
}
.qat-update-caret {
    margin-left: 4px;
}
.qat-globe {
    margin-left: 8px;
}
.qat-combo {
    display: flex;
    flex: none;
    align-items: center;
    height: 19px;
    background: #f2f2f2;
    border: 1px solid #d3dde2;
    color: #111;
    font-size: 12px;
    padding-left: 5px;
    white-space: nowrap;
}
.combo-material {
    width: 83px;
    margin-left: 8px;
}
.combo-appearance {
    width: 79px;
    margin-left: 3px;
    padding-left: 3px;
}
.swatch {
    width: 13px;
    height: 14px;
    border-radius: 50%;
    background: radial-gradient(circle at 40% 35%, #8a4a2c, #3c1a0c);
    margin-right: 4px;
    flex: none;
}
.combo-caret {
    border: 4px solid transparent;
    border-top-color: #ddd;
    margin: 4px 6px 0 6px;
}
.qat-wheel {
    margin: 0 0 0 -2px;
    width: 18px;
    height: 18px;
}
.qat-clear {
    margin-left: 2px;
}
.qat-clear-two {
    margin-left: 8px;
}
.qat-fx {
    margin-left: 8px;
    width: 15px;
    font-family: "Liberation Serif", serif;
    font-size: 14px;
    color: #eee;
}
.qat-fx sub {
    font-size: 8px;
}
.qat-cross {
    margin-left: 8px;
}
.qat-more {
    margin-left: 8px;
    margin-top: 2px;
    border: 4px solid transparent;
    border-top-color: #111;
    box-shadow: 0 -2px 0 -1px #111;
}
.title-text {
    flex: 1;
    text-align: center;
    line-height: 22px;
    font-size: 11.5px;
    color: #111;
    white-space: nowrap;
    background: radial-gradient(ellipse 260px 18px at 50% 50%, #6fa3d8 60%, rgba(111,163,216,0));
}
.search-bar {
    display: flex;
    align-items: center;
    width: 480px;
    height: 23px;
    background: linear-gradient(#6e6e6e, #3e3e3e);
    color: #eee;
}
.search-arrow {
    border: 4px solid transparent;
    border-left: 5px solid #111;
    border-right: 0;
    margin-left: 4px;
    width: 0;
    margin-right: 5px;
}
.search-input {
    width: 178px;
    height: 20px;
    background: #f6f6f6;
    color: #777;
    font-style: italic;
    font-size: 11.5px;
    line-height: 21px;
    padding-left: 2px;
}
.search-icon {
    width: 16px;
    height: 16px;
}
.search-binoc {
    margin-left: 4px;
    color: #e8e8e8;
}
.search-key {
    margin-left: 8px;
}
.search-dish {
    margin-left: 8px;
}
.search-star {
    margin-left: 8px;
}
.search-user {
    margin-left: 8px;
}
.search-user-name {
    margin-left: 4px;
    font-size: 12px;
    white-space: nowrap;
    width: 80px;
    color: #eee;
}
.search-caret {
    border: 3px solid transparent;
    border-top-color: #999;
    margin: 3px 0 0 7px;
}
.search-x {
    margin-left: 7px;
}
.search-sep {
    width: 1px;
    height: 17px;
    background: #777;
    margin-left: 10px;
}
.search-help {
    width: 16px;
    height: 16px;
    margin-left: 8px;
    border-radius: 50%;
    background: #f4f6fb;
    border: 1px solid #3c63a8;
    color: #1f4ea8;
    font-weight: bold;
    font-size: 13px;
    line-height: 14px;
    text-align: center;
}
.win-buttons {
    display: flex;
    margin-left: 18px;
    height: 19px;
    border: 1px solid #6ba0d2;
    border-top: 0;
    border-radius: 0 0 5px 5px;
    overflow: hidden;
}
.win-btn {
    display: flex;
    align-items: center;
    justify-content: center;
    height: 18px;
    background: linear-gradient(#2a78c4, #195ea8);
    border-right: 1px solid #6ba0d2;
    color: #fff;
    font-weight: bold;
    font-size: 13px;
}
.win-min {
    width: 28px;
}
.win-max {
    width: 27px;
}
.win-close {
    width: 46px;
    border-right: 0;
}
.glyph-min {
    width: 10px;
    height: 4px;
    margin-top: 5px;
    background: #fff;
    border: 1px solid #27496e;
}
.glyph-max {
    width: 10px;
    height: 10px;
    border: 2px solid #fff;
    box-shadow: 2px -2px 0 -1px #fff;
}
.tab-bar {
    display: flex;
    align-items: flex-end;
    height: 19px;
    background: #424242;
    padding-left: 3px;
}
.tab {
    height: 17px;
    line-height: 16px;
    padding: 0 9.7px;
    font-size: 12px;
    color: #f2f2f2;
    white-space: nowrap;
}
.tab-active {
    background: #f7f7f7;
    color: #111;
    padding: 0 9px;
    width: 80px;
    margin-right: 2px;
}
.tab-extra {
    display: flex;
    align-items: center;
    height: 17px;
    margin-left: 24px;
}
.tab-pill {
    width: 12px;
    height: 7px;
    background: #eee;
    border-radius: 2px;
}
.tab-pill-caret {
    border: 3px solid transparent;
    border-top-color: #ddd;
    margin: 3px 0 0 4px;
}

/* ribbon */
.ribbon {
    display: flex;
    height: 95px;
    flex: none;
    background: #b4b4b4;
}
.panel {
    display: flex;
    flex-direction: column;
    flex: none;
    height: 93px;
    margin-right: 1px;
    border-right: 1px solid #cfcfcf;
    background: #fff;
}
.panel-sketch {
    width: 78px;
}
.panel-create {
    width: 295px;
}
.panel-modify {
    width: 312px;
}
.panel-work {
    width: 125px;
}
.panel-pattern {
    width: 98px;
}
.panel-setup {
    width: 72px;
}
.panel-flat {
    width: 69px;
}
.panel-body {
    display: flex;
    flex: 1;
    padding-top: 6px;
}
.panel-title {
    height: 17px;
    line-height: 15px;
    background: #eee;
    border-top: 1px solid #d8d8d8;
    text-align: center;
    font-size: 11.5px;
    color: #333;
}
.title-caret {
    display: inline-block;
    margin-left: 3px;
    border: 3.5px solid transparent;
    border-top-color: #333;
    vertical-align: -2px;
}
.ribbon-rest {
    flex: 1;
    background: linear-gradient(#d2d2d2, #8e8e8e);
}
.big-btn {
    position: relative;
    display: flex;
    flex-direction: column;
    align-items: center;
    flex: none;
}
.big-icon {
    width: 31px;
    height: 31px;
    margin-bottom: 4px;
}
.big-label {
    text-align: center;
    line-height: 15px;
    font-size: 11.5px;
    color: #222;
    white-space: nowrap;
}
.btn-full {
    width: 100%;
}
.btn-face {
    width: 42px;
}
.btn-flange {
    width: 38px;
}
.btn-contour {
    width: 52px;
}
.btn-cut {
    width: 40px;
}
.btn-seam {
    width: 40px;
}
.btn-punch {
    width: 42px;
}
.btn-plane {
    width: 52px;
}
.small-col {
    display: flex;
    flex-direction: column;
    gap: 8px;
    padding-top: 1px;
    margin-left: 4px;
}
.col-create-one {
    width: 99px;
}
.col-modify-one {
    width: 67px;
}
.panel-work .small-col {
    margin-left: 5px;
}
.panel-pattern .small-col {
    margin-left: 7px;
}
.small-btn {
    display: flex;
    align-items: center;
    gap: 5px;
    height: 16px;
    font-size: 11.5px;
    color: #222;
    white-space: nowrap;
}
.small-icon {
    width: 16px;
    height: 16px;
}
.mini-caret {
    display: inline-block;
    border: 2.5px solid transparent;
    border-top-color: #333;
    margin-top: 3px;
}
.caret-sketch {
    position: absolute;
    right: 5px;
    top: 52px;
}
.caret-plane {
    margin-top: 5px;
}

/* main area */
.main {
    display: flex;
    flex: 1;
    min-height: 0;
    padding: 0 2px 2px 0;
}
.browser {
    display: flex;
    flex-direction: column;
    width: 235px;
    padding-left: 3px;
    flex: none;
    background: #fff;
    border-right: 2px solid #8a8a8a;
    padding-right: 3px;
    font-size: 10.8px;
}
.browser-grip {
    display: flex;
    align-items: center;
    height: 16px;
    flex: none;
}
.grip-lines {
    width: 213px;
    height: 5px;
    border-top: 1px solid #aaa;
    border-bottom: 1px solid #aaa;
}
.grip-close {
    margin-left: 4px;
    font-size: 10px;
    font-weight: bold;
    color: #111;
}
.browser-header {
    display: flex;
    align-items: center;
    height: 21px;
    flex: none;
    background: #aaa;
    color: #f0f0f0;
    font-weight: bold;
    font-size: 13px;
    padding-left: 8px;
}
.browser-name-caret {
    border: 4px solid transparent;
    border-top-color: #f0f0f0;
    margin: 4px 0 0 3px;
}
.browser-help {
    position: relative;
    margin-left: auto;
    margin-right: 4px;
    width: 13px;
    height: 14px;
    background: #ffffc4;
    border: 1px solid #222;
    border-radius: 2px;
    color: #1a1a8a;
    font-size: 11px;
    line-height: 12px;
    text-align: center;
}
.browser-help::after {
    content: "";
    position: absolute;
    right: 0;
    bottom: -3px;
    border: 2px solid transparent;
    border-top-color: #ffffc4;
    border-right-color: #ffffc4;
}
.browser-tools {
    display: flex;
    align-items: center;
    height: 27px;
    flex: none;
    padding-left: 4px;
}
.tool-icon {
    width: 15px;
    height: 15px;
}
.tool-binoc {
    color: #111;
}
.tool-sep {
    width: 1px;
    height: 18px;
    background: #aaa;
    margin: 0 9px 0 7px;
}
.tree {
    flex: 1;
    border: 1px solid #8a8a8a;
    min-height: 0;
    color: #15152a;
}
.tree-root, .tree-folded, .tree-row {
    position: relative;
    display: flex;
    align-items: center;
    gap: 3px;
    height: 18px;
    white-space: nowrap;
}
.tree-root {
    padding-left: 5px;
    background: #eee;
}
.tree-root::after {
    content: "";
    position: absolute;
    left: 8px;
    top: 18px;
    height: 5px;
    border-left: 1px solid #999;
}
.tree-folded {
    padding-left: 25px;
    gap: 2px;
}
.tree-folded::after {
    content: "";
    position: absolute;
    left: 13px;
    top: 9px;
    width: 8px;
    border-top: 1px solid #999;
}
.tree-list {
    list-style: none;
    margin: 0;
    padding: 0;
}
.tree-row {
    padding-left: 43px;
}
.tree-row::before {
    content: "";
    position: absolute;
    left: 27px;
    top: 0;
    bottom: 0;
    border-left: 1px solid #999;
}
.tree-row:last-child::before {
    bottom: 9px;
}
.tree-row::after {
    content: "";
    position: absolute;
    left: 27px;
    top: 9px;
    width: 12px;
    border-top: 1px solid #999;
}
.tree-icon {
    width: 16px;
    height: 16px;
    position: relative;
    z-index: 1;
}
.expander {
    position: absolute;
    left: 23px;
    top: 5px;
    z-index: 2;
    width: 9px;
    height: 9px;
    border: 1px solid #888;
    background: linear-gradient(#222, #222) center / 5px 1px no-repeat,
                linear-gradient(#222, #222) center / 1px 5px no-repeat,
                #fff;
}
.expander.is-open {
    left: 4px;
    background: linear-gradient(#222, #222) center / 5px 1px no-repeat, #fff;
}
.is-suppressed {
    color: #7d7d85;
}
.is-suppressed > span:last-child {
    text-decoration: line-through;
}
.row-info {
    padding-left: 42px;
}
.info-mark {
    width: 14px;
    height: 14px;
    flex: none;
    border: 1px solid #222;
    border-radius: 50%;
    background: #fff;
    text-align: center;
    font-family: "Liberation Serif", serif;
    font-size: 12px;
    line-height: 12px;
    position: relative;
    z-index: 1;
}

/* viewport, with the windows floating over it */
.viewport {
    position: relative;
    flex: 1;
    background: #fff;
    overflow: hidden;
}
.scene {
    position: absolute;
    left: 0;
    top: 0;
    width: 1683px;
    height: 877px;
}
.axis-z, .axis-y, .axis-x {
    font-size: 11px;
    font-weight: bold;
}
.axis-z {
    fill: #4a4ae8;
}
.axis-y {
    fill: #58e858;
}
.axis-x {
    fill: #f06060;
}
.cube-text {
    font-size: 9px;
    font-weight: bold;
    fill: #a8a8a8;
    font-style: italic;
}
.vb-text {
    font-size: 12px;
    font-weight: bold;
    fill: #1b3f9e;
}
.view-controls {
    position: absolute;
    right: 1px;
    top: 7px;
    display: flex;
    align-items: center;
    gap: 8px;
}
.view-min {
    width: 12px;
    height: 5px;
    margin-top: 5px;
    border: 1px solid #666;
}
.view-restore {
    width: 10px;
    height: 11px;
    border: 1px solid #666;
    box-shadow: 2px -2px 0 -1px #666;
}
.view-close {
    font-size: 12px;
    color: #666;
    width: 12px;
}
.size-window {
    position: absolute;
    left: 16px;
    top: 113px;
    width: 130px;
    height: 311px;
    background: #fff;
    border: 1px solid #777;
    border-radius: 6px;
    box-shadow: 1px 2px 5px rgba(0,0,0,.35);
    padding: 0 5px;
    font-size: 11px;
}
.size-head {
    display: flex;
    align-items: center;
    gap: 7px;
    height: 28px;
    padding: 0 0 2px 3px;
    color: #222;
    font-size: 12px;
}
.size-icon {
    width: 13px;
    height: 13px;
}
.size-close {
    position: absolute;
    right: 6px;
    top: -1px;
    width: 47px;
    height: 20px;
    border: 1px solid #aaa;
    border-top: 0;
    border-radius: 0 0 4px 4px;
    text-align: center;
    color: #777;
    line-height: 18px;
    font-weight: bold;
    background: #fff;
}
.size-body {
    display: flex;
    flex-direction: column;
    height: 275px;
    padding: 11px 0 0 16px;
    background: #ffc4c4;
    border: 1px solid #8a8a8a;
    color: #222;
}
.size-row {
    display: flex;
    align-items: center;
    justify-content: space-between;
    width: 72px;
    height: 19px;
}
.size-input {
    width: 31px;
    height: 19px;
    background: #fff;
    text-align: right;
    padding-right: 3px;
    line-height: 19px;
}
.size-result {
    margin-top: 4px;
    line-height: 15px;
    white-space: nowrap;
}
.dormant {
    display: flex;
    align-items: center;
    gap: 6px;
    margin-top: 29px;
    height: 13px;
}
.check {
    width: 13px;
    height: 13px;
    background: #e4e8f4;
    border: 1px solid #8a8a8a;
    color: #3f5fa8;
    font-size: 11px;
    line-height: 11px;
    text-align: center;
    font-weight: bold;
}
.size-btn {
    width: 72px;
    height: 21px;
    line-height: 19px;
    text-align: center;
    background: linear-gradient(#f4f4f4 45%, #d4d4d4);
    border: 1px solid #8a8a8a;
    border-radius: 3px;
    color: #222;
    white-space: nowrap;
}
.btn-init {
    margin-top: 12px;
}
.btn-prev-s {
    margin-top: 19px;
}
.btn-sup-s {
    margin-top: 9px;
    border: 1px solid #3fa8dc;
    box-shadow: inset 0 0 0 1px #bfe5f6;
}
.btn-prev-r {
    margin-top: 18px;
}
.btn-sup-r {
    margin-top: 8px;
    background: #f6f6f6;
    border-color: #bbb;
    color: #a01828;
}
.msg-window {
    position: absolute;
    left: 33px;
    top: 599px;
    width: 354px;
    height: 153px;
    padding: 0 6px 6px;
    background: linear-gradient(100deg, #b6d6f2, #d8ebfa 20%, #b9daf6 60%, #d3e7f8);
    border: 1px solid #333;
    border-radius: 6px;
    box-shadow: 2px 4px 12px rgba(0,0,0,.7);
    display: flex;
    flex-direction: column;
}
.msg-head {
    display: flex;
    align-items: center;
    height: 28px;
    flex: none;
    padding-left: 1px;
    font-size: 12px;
    color: #111;
}
.msg-close {
    position: absolute;
    right: 6px;
    top: -1px;
    width: 47px;
    height: 19px;
    background: linear-gradient(#d88a80, #b83a28 60%, #a0321e);
    border: 1px solid #7a2a20;
    border-top: 0;
    border-radius: 0 0 4px 4px;
    color: #fff;
    font-weight: bold;
    text-align: center;
    line-height: 17px;
}
.msg-body {
    flex: 1;
    display: flex;
    flex-direction: column;
    border: 1px solid #555;
    background: #fff;
}
.msg-text {
    height: 67px;
    padding: 26px 0 0 12px;
    line-height: 16px;
    font-size: 11.5px;
    color: #10103a;
}
.msg-foot {
    flex: 1;
    display: flex;
    justify-content: flex-end;
    align-items: flex-start;
    padding: 14px 10px 0 0;
    background: #f0f0f0;
}
.msg-ok {
    width: 85px;
    height: 23px;
    line-height: 21px;
    text-align: center;
    font-size: 12px;
    background: linear-gradient(#ecf5fb 45%, #bfdcec);
    border: 1px solid #3fa3d8;
    border-radius: 3px;
    color: #111;
}

/* status and task bars */
.status-bar {
    display: flex;
    align-items: center;
    height: 26px;
    flex: none;
    background: linear-gradient(#f8f8f8, #b4b4b4);
    padding: 4px 0 0 1px;
    font-size: 12px;
}
.status-ready {
    margin-right: auto;
}
.status-cell {
    height: 22px;
    line-height: 22px;
    width: 40px;
    padding-left: 8px;
    border-left: 1px solid #d8d8d8;
}
.status-cell:last-child {
    width: 39px;
    padding-left: 6px;
}
.taskbar {
    display: flex;
    align-items: center;
    height: 40px;
    flex: none;
    gap: 2px;
    border-top: 1px solid #1c466f;
    background: linear-gradient(112deg, transparent 68.5%, rgba(255,255,255,.35) 70%, rgba(255,255,255,.35) 71%, transparent 74%),
                linear-gradient(90deg, #1c6ba8, #2c8cc4 15%, #3f9fd2 30%, #4ca8dc 48%, #3f8fca 66%, #1a5f9e 73%, #17497f 85%, #163f74);
    color: #fff;
}
.start-orb {
    display: flex;
    align-items: center;
    justify-content: center;
    width: 38px;
    height: 38px;
    margin: 0 12px 0 8px;
    border-radius: 50%;
    background: radial-gradient(circle at 50% 35%, #79b8d8, #1d6a96 60%, #0f3e64);
    border: 1px solid #0f3e64;
    flex: none;
}
.orb-flag {
    width: 26px;
    height: 26px;
}
.task-btn, .task-plain {
    display: flex;
    align-items: center;
    justify-content: center;
    width: 60px;
    height: 38px;
    flex: none;
}
.task-btn {
    border: 1px solid rgba(15,50,80,.7);
    box-shadow: inset 0 0 0 1px rgba(255,255,255,.3);
    border-radius: 3px;
    background: linear-gradient(rgba(255,255,255,.3), rgba(255,255,255,.08));
}
.task-folder {
    width: 54px;
    margin-right: -2px;
}
.task-sliver {
    width: 5px;
    height: 38px;
    border: 1px solid rgba(15,50,80,.7);
    border-radius: 2px;
    background: rgba(255,255,255,.18);
    flex: none;
}
.task-lit {
    background: linear-gradient(rgba(255,255,255,.75), rgba(255,255,255,.35));
}
.task-icon {
    width: 32px;
    height: 32px;
}
.app-grid {
    display: grid;
    grid-template-columns: repeat(3, 5px);
    gap: 3px;
    padding: 7px 6px;
    width: 30px;
    height: 30px;
    background: #f2f2f2;
    border-radius: 2px;
}
.app-grid span {
    height: 5px;
}
.dot-r {
    background: #ea4335;
}
.dot-g {
    background: #2a9d5c;
}
.dot-b {
    background: #2a86e0;
}
.dot-y {
    background: #fbb400;
}
.inventor-tile {
    display: flex;
    flex-direction: column;
    align-items: center;
    width: 32px;
    height: 32px;
    background: linear-gradient(90deg, #e08a30, #f4c88c 60%, #fff0dc);
}
.tile-mark {
    width: 17px;
    height: 20px;
    margin-top: 2px;
}
.tile-text {
    font-size: 8px;
    font-weight: bold;
    color: #fff;
    line-height: 9px;
}
.tray {
    display: flex;
    align-items: center;
    margin-left: auto;
    height: 38px;
}
.tray-lang {
    font-size: 12px;
    margin-right: 5px;
}
.tray-icon {
    width: 16px;
    height: 16px;
    margin-right: 8px;
}
.tray-kb {
    margin-right: 35px;
}
.tray-up {
    border: 4px solid transparent;
    border-bottom-color: #fff;
    border-top: 0;
    margin-right: 11px;
}
.clock {
    display: flex;
    flex-direction: column;
    align-items: center;
    width: 78px;
    gap: 4px;
    font-size: 12px;
    line-height: 13px;
}
.show-desktop {
    width: 14px;
    height: 38px;
    margin-left: 2px;
    border: 1px solid rgba(255,255,255,.4);
    background: rgba(255,255,255,.1);
}
```
